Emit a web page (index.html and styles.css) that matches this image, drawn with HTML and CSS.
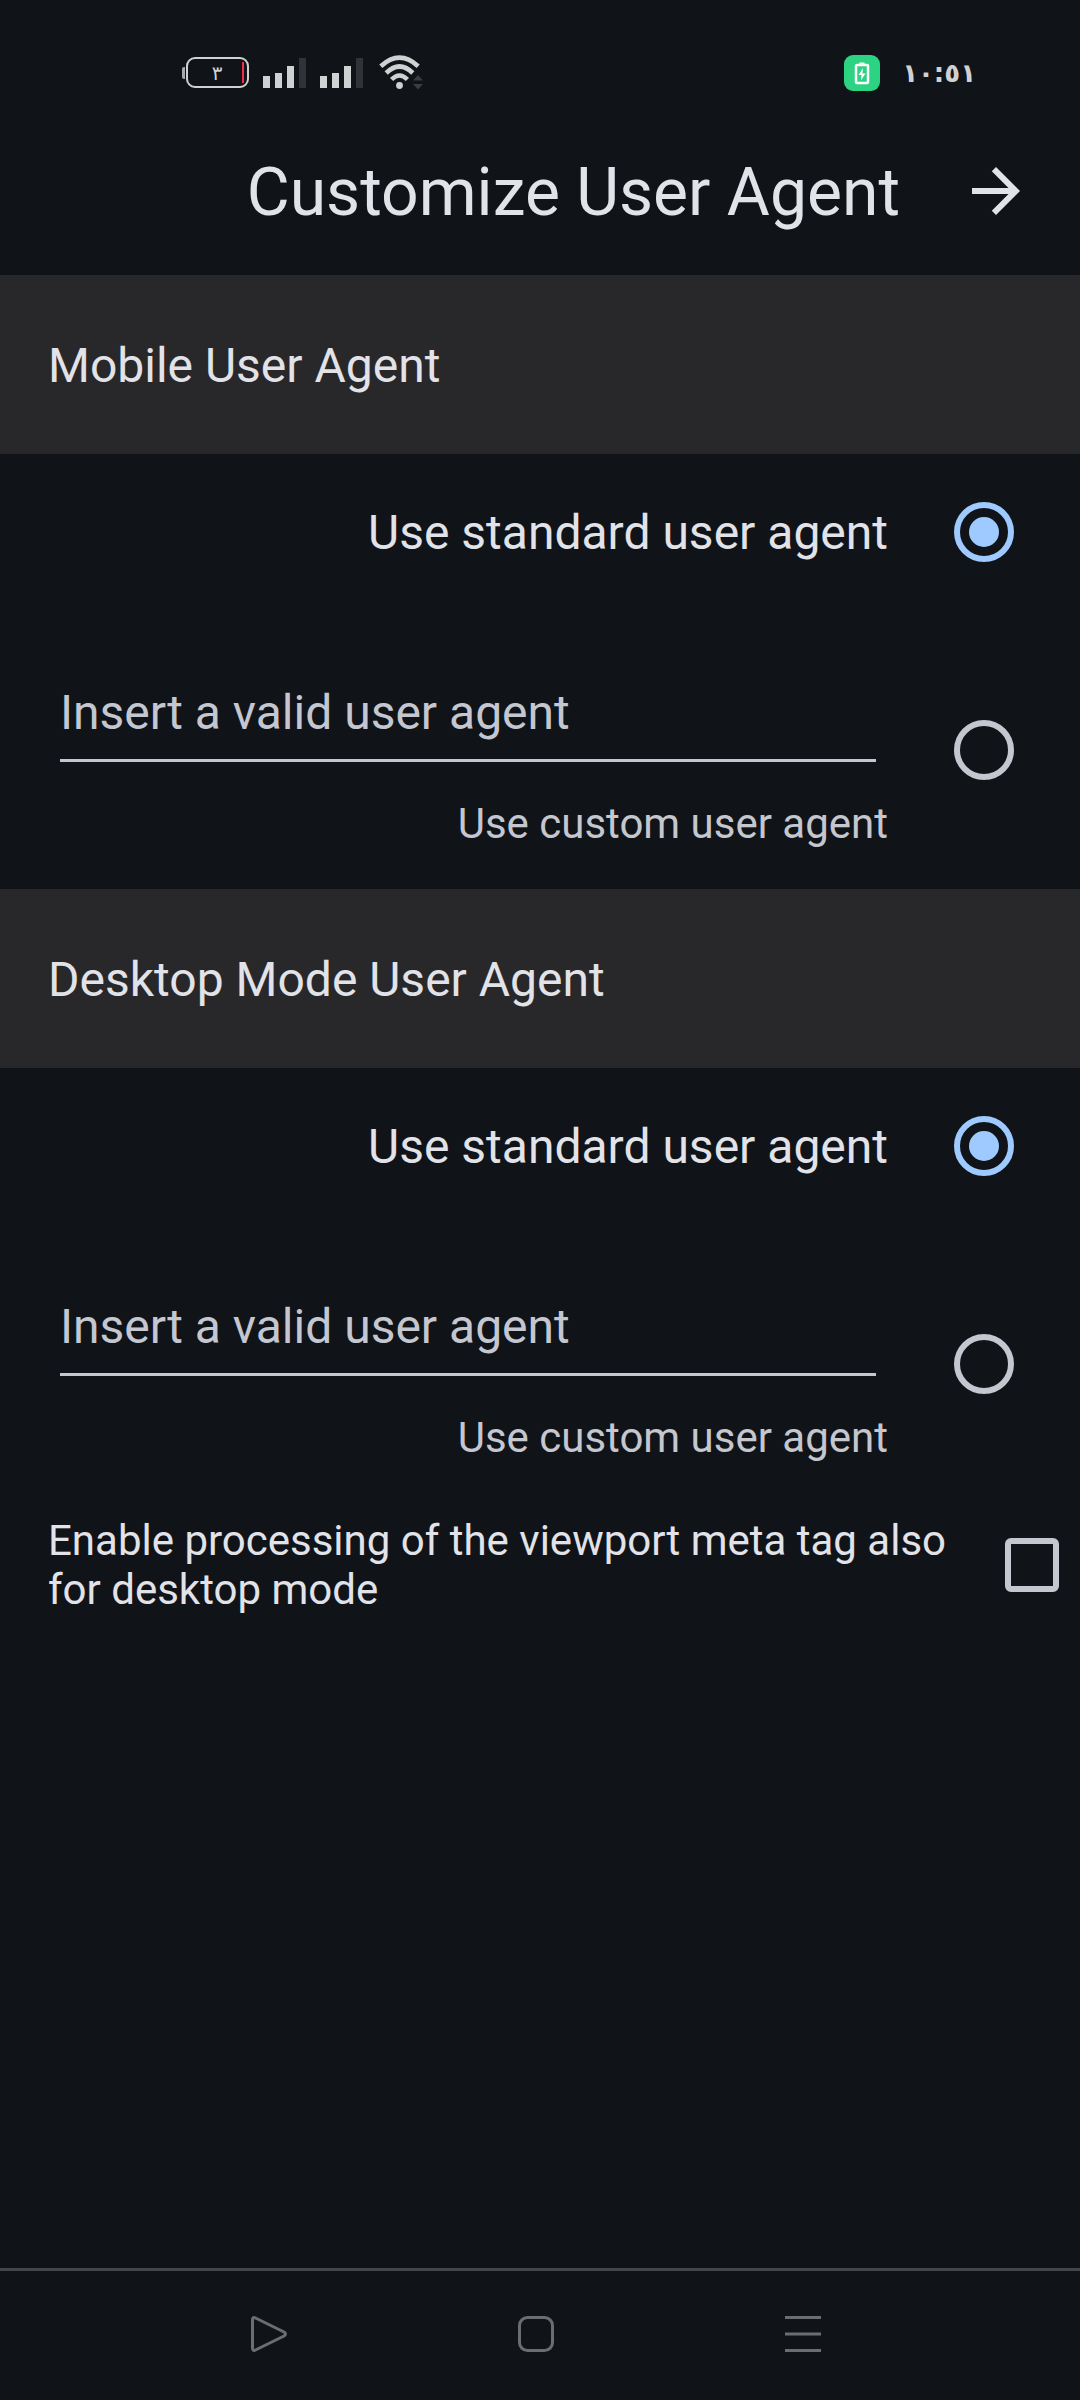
FILE: index.html
```html
<!DOCTYPE html>
<html lang="en">
<head>
<meta charset="utf-8">
<meta name="viewport" content="width=device-width, initial-scale=1">
<title>Customize User Agent</title>
<link rel="stylesheet" href="styles.css">
</head>
<body>
<div class="status-bar">
  <div class="status-group">
    <div class="battery">
      <span class="battery-tip"></span>
      <span class="battery-body"><span class="battery-text">٣</span><span class="battery-level"></span></span>
    </div>
    <svg class="signal" viewBox="0 0 43 30" aria-hidden="true"><path d="M0 18h7v12H0zM12 15h7v15h-7zM24 8h7v22h-7z" fill="#d0d1d3"/><path d="M36 0h7v30h-7z" fill="#303338"/></svg>
    <svg class="signal signal-second" viewBox="0 0 43 30" aria-hidden="true"><path d="M0 18h7v12H0zM12 15h7v15h-7zM24 8h7v22h-7z" fill="#d0d1d3"/><path d="M36 0h7v30h-7z" fill="#303338"/></svg>
    <svg class="wifi" viewBox="0 0 46 36" aria-hidden="true">
      <g fill="none" stroke="#d0d1d3" stroke-width="4.6"><path d="M1.800 11.200Q20.500 -6 39.200 11.200"/><path d="M7.200 18Q20.500 5 33.800 18"/><path d="M12.600 24.500Q20.500 16.500 28.400 24.500"/></g>
      <circle cx="20.500" cy="30.500" r="3.400" fill="#d0d1d3"/>
      <path d="M39 20l5 5.500H34zM39 34.500l5-5.500H34z" fill="#3a3d42"/>
    </svg>
  </div>
  <div class="status-group">
    <svg class="charge" viewBox="0 0 36 36" aria-hidden="true">
      <rect width="36" height="36" rx="9" fill="#2bd383"/>
      <path d="M15.500 7.500h5V10h-5z" fill="#fff"/>
      <rect x="12" y="10" width="12" height="18" rx="1" fill="none" stroke="#fff" stroke-width="2.5"/>
      <path d="M19 13l-4.500 7h3l-.6 5.500 4.600-7h-3z" fill="#fff"/>
    </svg>
    <bdo class="clock" dir="ltr">١٠:٥١</bdo>
  </div>
</div>

<header class="app-bar">
  <h1 class="title">Customize User Agent</h1>
  <button class="back" type="button" aria-label="Back">
    <svg viewBox="0 0 24 24" aria-hidden="true"><path d="M12 4l-1.410 1.410L16.170 11H4v2h12.170l-5.580 5.590L12 20l8-8z" fill="currentColor"/></svg>
  </button>
</header>

<main class="content">
  <section>
    <h2 class="section-title">Mobile User Agent</h2>
    <div class="option">
      <label class="option-label" for="mobile-standard">Use standard user agent</label>
      <input class="radio" type="radio" name="mobile" id="mobile-standard" checked>
    </div>
    <div class="option">
      <div class="custom">
        <input class="agent-input" type="text" placeholder="Insert a valid user agent" aria-label="Custom mobile user agent">
        <label class="custom-label" for="mobile-custom">Use custom user agent</label>
      </div>
      <input class="radio" type="radio" name="mobile" id="mobile-custom">
    </div>
  </section>
  <section>
    <h2 class="section-title">Desktop Mode User Agent</h2>
    <div class="option">
      <label class="option-label" for="desktop-standard">Use standard user agent</label>
      <input class="radio" type="radio" name="desktop" id="desktop-standard" checked>
    </div>
    <div class="option">
      <div class="custom">
        <input class="agent-input" type="text" placeholder="Insert a valid user agent" aria-label="Custom desktop user agent">
        <label class="custom-label" for="desktop-custom">Use custom user agent</label>
      </div>
      <input class="radio" type="radio" name="desktop" id="desktop-custom">
    </div>
  </section>
  <div class="viewport-row">
    <label class="viewport-label" for="viewport-meta">Enable processing of the viewport meta tag also for desktop mode</label>
    <input class="checkbox" type="checkbox" id="viewport-meta">
  </div>
</main>

<nav class="nav-bar">
  <button type="button" aria-label="Go back"><svg viewBox="0 0 36 36" aria-hidden="true"><path d="M1.500 4v28q0 3.500 3 2L33 20q3-2 0-4L4.500 2q-3-1.500-3 2z"/></svg></button>
  <button type="button" aria-label="Home"><svg viewBox="0 0 36 36" aria-hidden="true"><rect x="1.500" y="1.500" width="33" height="33" rx="8"/></svg></button>
  <button type="button" aria-label="Recent apps"><svg viewBox="0 0 36 36" aria-hidden="true"><path d="M0 1.500h36M0 18h36M0 34.500h36"/></svg></button>
</nav>
</body>
</html>
```
FILE: styles.css
```css
* {
  box-sizing: border-box;
}

body {
  margin: 0;
  min-height: 100vh;
  display: flex;
  flex-direction: column;
  background: #101418;
  color: #e2e2e9;
  font-family: Roboto, "Noto Sans", sans-serif;
}

button {
  padding: 0;
  border: 0;
  background: none;
  color: inherit;
}

svg {
  display: block;
}

.status-bar {
  display: flex;
  justify-content: space-between;
  align-items: center;
  height: 107px;
  padding: 38px 104px 0 182px;
}

.status-group {
  display: flex;
  align-items: center;
}

.battery {
  display: flex;
  align-items: center;
  gap: 1px;
  margin-right: 14px;
}

.battery-tip {
  width: 3px;
  height: 12px;
  border-radius: 2px 0 0 2px;
  background: #a8a9ac;
}

.battery-body {
  display: flex;
  align-items: center;
  width: 63px;
  height: 31px;
  padding-right: 3px;
  border: 2px solid #d0d1d3;
  border-radius: 9px;
}

.battery-text {
  flex: 1;
  padding-left: 4px;
  text-align: center;
  font: 20px/24px "DejaVu Sans", sans-serif;
  color: #d0d1d3;
}

.battery-level {
  width: 2px;
  height: 21px;
  background: #f0304a;
}

.signal {
  width: 43px;
  height: 30px;
}

.signal-second {
  margin: 0 16px 0 14px;
}

.wifi {
  width: 46px;
  height: 36px;
}

.charge {
  width: 36px;
  height: 36px;
  margin-right: 22px;
}

.clock {
  font: bold 26px/36px "DejaVu Sans", sans-serif;
  color: #d0d1d3;
}

.app-bar {
  display: flex;
  justify-content: flex-end;
  align-items: center;
  gap: 60px;
  min-height: 168px;
  padding: 0 48px;
}

.title {
  margin: 0;
  padding-top: 4px;
  font-size: 66px;
  line-height: 78px;
  font-weight: 400;
}

.back svg {
  width: 72px;
  height: 72px;
}

.content {
  flex: 1;
}

.section-title {
  margin: 0;
  padding: 63px 48px 60px;
  background: #28282a;
  font-size: 48px;
  line-height: 56px;
  font-weight: 400;
}

.option {
  display: flex;
  align-items: center;
  gap: 66px;
  padding: 0 66px 0 48px;
}

.option-label {
  flex: 1;
  padding: 51px 0 49px;
  text-align: right;
  font-size: 48px;
  line-height: 56px;
}

.radio {
  appearance: none;
  flex: none;
  width: 60px;
  height: 60px;
  margin: 0;
  border: 6px solid #c4c6d0;
  border-radius: 50%;
}

.radio:checked {
  padding: 9px;
  border-color: #9fcaff;
  background: #9fcaff content-box;
}

.custom {
  flex: 1;
  display: flex;
  flex-direction: column;
  gap: 37px;
  padding: 75px 0 40px;
  color: #c4c6d0;
}

.agent-input {
  height: 77px;
  margin: 0 12px;
  padding: 0 0 20px;
  border: 0;
  border-bottom: 3px solid #c4c6d0;
  background: none;
  color: inherit;
  font: 48px/54px Roboto, "Noto Sans", sans-serif;
}

.agent-input::placeholder {
  color: #c4c6d0;
  opacity: 1;
}

.custom-label {
  text-align: right;
  font-size: 42px;
  line-height: 50px;
}

.viewport-row {
  display: flex;
  align-items: center;
  gap: 48px;
  padding: 13px 21px 13px 48px;
}

.viewport-label {
  flex: 1;
  font-size: 42px;
  line-height: 49px;
}

.checkbox {
  appearance: none;
  flex: none;
  width: 54px;
  height: 54px;
  margin: 0;
  border: 6px solid #c4c6d0;
  border-radius: 6px;
}

.nav-bar {
  display: grid;
  grid-template-columns: repeat(3, 1fr);
  align-items: center;
  justify-items: center;
  height: 132px;
  padding: 0 144px 3px 135px;
  border-top: 3px solid #44474a;
}

.nav-bar svg {
  width: 36px;
  height: 36px;
  fill: none;
  stroke: #6b6e71;
  stroke-width: 3;
}
```
